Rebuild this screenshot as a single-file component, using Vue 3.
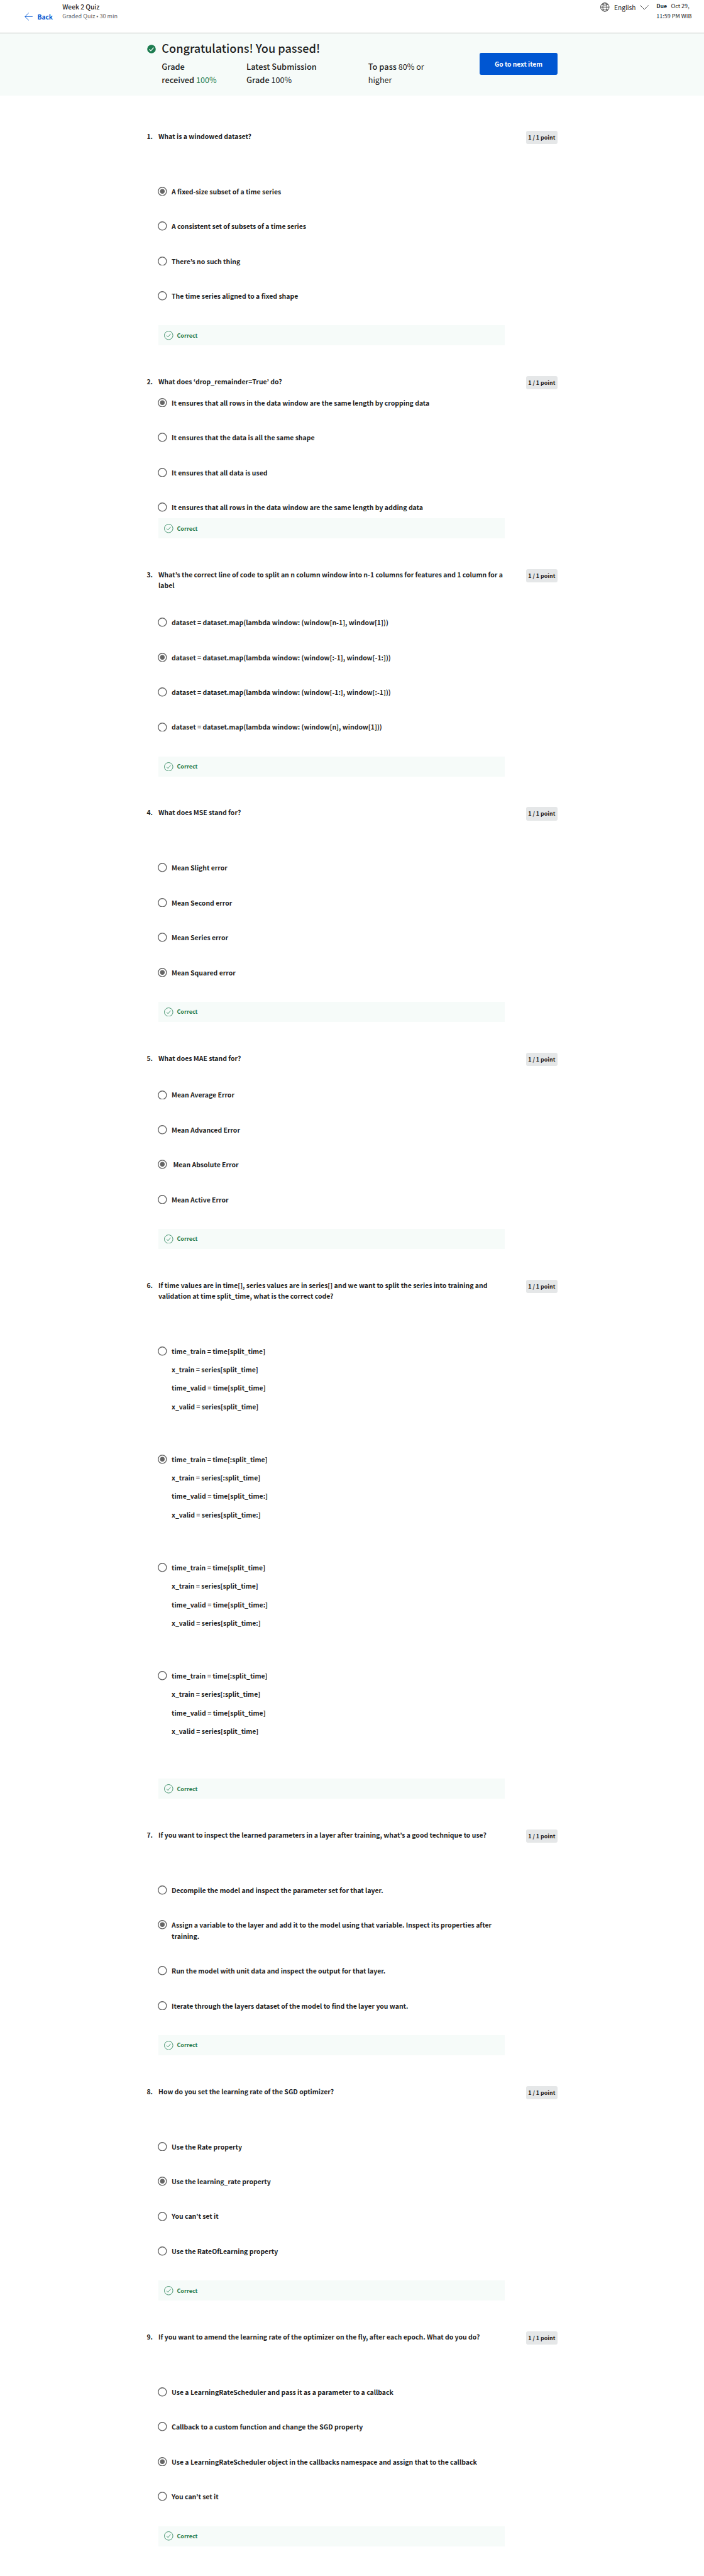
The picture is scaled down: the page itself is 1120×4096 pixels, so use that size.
<script setup>
const questions = [
  {
    title: 'What is a windowed dataset?',
    selected: 0,
    options: ['A fixed-size subset of a time series', 'A consistent set of subsets of a time series', 'There’s no such thing', 'The time series aligned to a fixed shape']
  },
  {
    title: 'What does ‘drop_remainder=True’ do?',
    spacing: 'tight',
    selected: 0,
    options: [
      'It ensures that all rows in the data window are the same length by cropping data',
      'It ensures that the data is all the same shape',
      'It ensures that all data is used',
      'It ensures that all rows in the data window are the same length by adding data'
    ]
  },
  {
    title: 'What’s the correct line of code to split an n column window into n-1 columns for features and 1 column for a\nlabel',
    spacing: 'short',
    selected: 1,
    options: [
      'dataset = dataset.map(lambda window: (window[n-1], window[1]))',
      'dataset = dataset.map(lambda window: (window[:-1], window[-1:]))',
      'dataset = dataset.map(lambda window: (window[-1:], window[:-1]))',
      'dataset = dataset.map(lambda window: (window[n], window[1]))'
    ]
  },
  {
    title: 'What does MSE stand for?',
    selected: 3,
    options: ['Mean Slight error', 'Mean Second error', 'Mean Series error', 'Mean Squared error']
  },
  {
    title: 'What does MAE stand for?',
    spacing: 'short',
    selected: 2,
    options: ['Mean Average Error', 'Mean Advanced Error', '\u00a0Mean Absolute Error', 'Mean Active Error']
  },
  {
    title: 'If time values are in time[], series values are in series[] and we want to split the series into training and\nvalidation at time split_time, what is the correct code?',
    spacing: 'code',
    selected: 1,
    options: [
      ['time_train = time[split_time]', 'x_train = series[split_time]', 'time_valid = time[split_time]', 'x_valid = series[split_time]'],
      ['time_train = time[:split_time]', 'x_train = series[:split_time]', 'time_valid = time[split_time:]', 'x_valid = series[split_time:]'],
      ['time_train = time[split_time]', 'x_train = series[split_time]', 'time_valid = time[split_time:]', 'x_valid = series[split_time:]'],
      ['time_train = time[:split_time]', 'x_train = series[:split_time]', 'time_valid = time[split_time]', 'x_valid = series[split_time]']
    ]
  },
  {
    title: 'If you want to inspect the learned parameters in a layer after training, what’s a good technique to use?',
    selected: 1,
    options: [
      'Decompile the model and inspect the parameter set for that layer.',
      'Assign a variable to the layer and add it to the model using that variable. Inspect its properties after\ntraining.',
      'Run the model with unit data and inspect the output for that layer.',
      'Iterate through the layers dataset of the model to find the layer you want.'
    ]
  },
  {
    title: 'How do you set the learning rate of the SGD optimizer?',
    selected: 1,
    options: ['Use the Rate property', 'Use the learning_rate property', 'You can’t set it', 'Use the RateOfLearning property']
  },
  {
    title: 'If you want to amend the learning rate of the optimizer on the fly, after each epoch. What do you do?',
    selected: 2,
    options: [
      'Use a LearningRateScheduler and pass it as a parameter to a callback',
      'Callback to a custom function and change the SGD property',
      'Use a LearningRateScheduler object in the callbacks namespace and assign that to the callback',
      'You can’t set it'
    ]
  }
]
const toLines = (option) => (Array.isArray(option) ? option : [option])
</script>

<template>
  <div class="page">
    <header class="topbar">
      <a class="back">
        <svg class="arrow" viewBox="0 0 22 22" fill="none" stroke="currentColor" stroke-width="1.5">
          <path d="M11.5 1 1.2 11l10.3 10M1.2 11H22" />
        </svg>
        <span>Back</span>
      </a>
      <div class="heading">
        <div class="name">Week 2 Quiz</div>
        <div class="meta">Graded Quiz • 30 min</div>
      </div>
      <div class="language">
        <svg class="globe" viewBox="0 0 25 25" fill="none" stroke="currentColor" stroke-width="1.4">
          <circle cx="12.5" cy="12.5" r="11.6" />
          <ellipse cx="12.5" cy="12.5" rx="5.6" ry="11.6" />
          <path d="M1 12.5h23M3.7 5.2c2.6 1.3 5.5 1.9 8.8 1.9s6.2-.6 8.8-1.9M3.7 19.8c2.6-1.3 5.5-1.9 8.8-1.9s6.2.6 8.8 1.9" />
        </svg>
        <span class="lang">English</span>
        <svg class="chevron" viewBox="0 0 24 13" fill="none" stroke="currentColor" stroke-width="1.4">
          <path d="M.7.7 12 12 23.3.7" />
        </svg>
      </div>
      <div class="due">
        <div><b>Due</b><span class="date">Oct 29,</span></div>
        <div>11:59 PM WIB</div>
      </div>
    </header>

    <section class="banner">
      <svg class="passed" viewBox="0 0 24 24">
        <circle cx="12" cy="12" r="11.7" fill="#1d7c50" />
        <path d="M6 12.6l4.2 4.2L17.8 7.8" fill="none" stroke="#fff" stroke-width="2.2" />
      </svg>
      <div class="result">
        <h1>Congratulations! You passed!</h1>
        <div class="stats">
          <div class="stat received">Grade<br />received <span class="good">100%</span></div>
          <div class="stat latest">Latest Submission<br />Grade <span>100%</span></div>
          <div class="stat">To pass <span>80% or<br />higher</span></div>
        </div>
      </div>
      <button class="next">Go to next item</button>
    </section>

    <main class="quiz">
      <article v-for="(q, i) in questions" :key="i" class="question" :class="q.spacing">
        <div class="number">{{ i + 1 }}.</div>
        <div class="body">
          <h2>{{ q.title }}</h2>
          <div class="options">
            <div v-for="(option, n) in q.options" :key="n" class="option">
              <svg class="radio" viewBox="0 0 25 25">
                <circle cx="12.5" cy="12.5" r="11.3" fill="#fff" stroke="#666" stroke-width="2.4" />
                <circle v-if="n === q.selected" cx="12.5" cy="12.5" r="6.3" fill="#666" />
              </svg>
              <div class="lines">
                <p v-for="(line, l) in toLines(option)" :key="l">{{ line }}</p>
              </div>
            </div>
          </div>
          <div class="feedback">
            <svg class="tick" viewBox="0 0 25 25" fill="none" stroke="currentColor" stroke-width="1.4">
              <circle cx="12.5" cy="12.5" r="11.6" />
              <path d="M7 13l3.7 3.9L18 8.3" />
            </svg>
            <span>Correct</span>
          </div>
        </div>
        <div class="points">1 / 1 point</div>
      </article>
    </main>
  </div>
</template>

<style>
html {
  font-size: 5.8345px;
}
body {
  margin: 0;
  background: #fff;
}
</style>

<style scoped>
.page {
  height: 4096px;
  overflow: hidden;
  background: #fff;
  color: #1f1f1f;
  font-family: "Noto Sans CJK KR", "Noto Sans", sans-serif;
  font-size: 1.79rem;
  line-height: 3rem;
  white-space: nowrap;
}
.page * {
  box-sizing: border-box;
}
h1,
h2,
p {
  margin: 0;
}
svg {
  flex: none;
}

.topbar {
  display: flex;
  align-items: flex-start;
  height: 9.1rem;
  padding-left: 6.7rem;
  padding-right: 3.3rem;
  border-bottom: 1px solid #bdbfbe;
}
.back {
  display: flex;
  align-items: center;
  gap: 1.3rem;
  width: 10.3rem;
  margin-top: 3rem;
  color: #0056d2;
  font-size: 1.75rem;
  font-weight: 700;
}
.arrow {
  width: 2.2rem;
  height: 2.2rem;
}
.heading {
  flex: 1;
  padding-top: 0.5rem;
  line-height: 2.65rem;
}
.name {
  font-size: 1.76rem;
  font-weight: 500;
}
.meta {
  font-size: 1.56rem;
  color: #666;
}
.language {
  display: flex;
  align-items: center;
  width: 15.2rem;
  padding-top: 0.5rem;
}
.globe {
  width: 2.5rem;
  height: 2.5rem;
}
.lang {
  width: 8.2rem;
  padding-left: 1.2rem;
  font-size: 1.74rem;
}
.chevron {
  width: 2.4rem;
  height: 1.3rem;
}
.due {
  width: 9.7rem;
  padding-top: 0.4rem;
  font-size: 1.55rem;
  line-height: 2.7rem;
}
.due b {
  font-size: 1.5rem;
}
.date {
  margin-left: 1.1rem;
}

.banner {
  display: flex;
  align-items: flex-start;
  height: 16.9rem;
  padding-left: 40.1rem;
  background: #f6fbf9;
}
.passed {
  width: 2.4rem;
  height: 2.4rem;
  margin-top: 3.1rem;
  margin-right: 1.6rem;
}
.result {
  width: 86.7rem;
  padding-top: 2rem;
}
h1 {
  font-size: 3.11rem;
  font-weight: 500;
  line-height: 4rem;
}
.stats {
  display: flex;
  margin-top: 1.4rem;
}
.stat {
  font-size: 2.2rem;
  font-weight: 500;
  line-height: 3.5rem;
}
.stat span {
  font-size: 2.16rem;
  font-weight: 400;
}
.stat .good {
  color: #1d7c50;
}
.received {
  width: 23.1rem;
}
.latest {
  width: 33.2rem;
}
.next {
  width: 21.2rem;
  height: 6rem;
  margin-top: 5.3rem;
  padding: 0;
  border: 0;
  border-radius: 0.5rem;
  background: #0056d2;
  color: #fff;
  font-family: inherit;
  font-size: 1.75rem;
  font-weight: 700;
}

.quiz {
  display: flex;
  flex-direction: column;
  gap: 8.31rem;
  padding: 9.6rem 40rem 0;
}
.question {
  --lead: 12.08rem;
  --gap: 6.5rem;
  --tail: 6.5rem;
  display: flex;
  align-items: flex-start;
  font-weight: 700;
}
.question.tight {
  --lead: 2.8rem;
  --tail: 1.5rem;
}
.question.short {
  --lead: 7.08rem;
}
.question.code {
  --gap: 11.5rem;
  --tail: 11.5rem;
}
.number {
  width: 3.2rem;
}
.body {
  width: 94.5rem;
}
h2 {
  margin-bottom: var(--lead);
  font-size: inherit;
  font-weight: inherit;
  white-space: pre;
}
.options {
  display: flex;
  flex-direction: column;
  gap: var(--gap);
  margin-bottom: var(--tail);
}
.option {
  display: flex;
  gap: 1.2rem;
}
.radio {
  width: 2.5rem;
  height: 2.5rem;
  margin: 0.2rem 0 0 -0.1rem;
}
.lines {
  display: flex;
  flex-direction: column;
  gap: 2rem;
  white-space: pre;
}
.feedback {
  display: flex;
  align-items: center;
  gap: 1rem;
  height: 5.5rem;
  padding-left: 1.55rem;
  background: #f6fbf9;
  color: #1d7c50;
  font-size: 1.54rem;
}
.tick {
  width: 2.5rem;
  height: 2.5rem;
}
.points {
  width: 8.5rem;
  height: 3.7rem;
  margin-left: auto;
  border-radius: 0.5rem;
  background: #e5e7e8;
  font-size: 1.52rem;
  line-height: 3.7rem;
  text-align: center;
}
</style>
